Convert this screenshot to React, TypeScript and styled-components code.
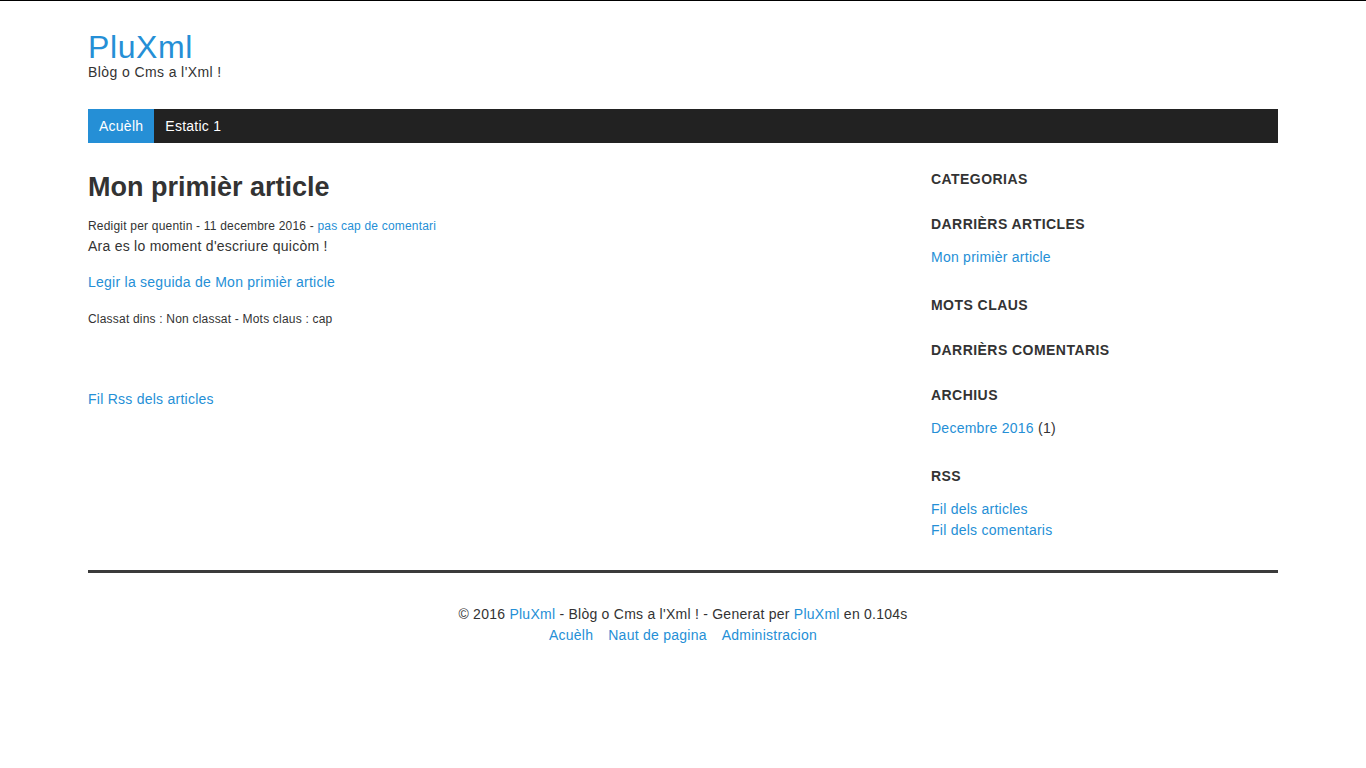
import React from "react";
import styled, { createGlobalStyle } from "styled-components";

const Global = createGlobalStyle`
  html, body { margin: 0; padding: 0; background: #fff; }
  body {
    font-family: "Liberation Sans", Arial, sans-serif;
    color: #333;
    font-size: 14px;
    letter-spacing: 0.25px;
    border-top: 1px solid #000;
  }
  a { color: #258fd6; text-decoration: none; }
`;

const Container = styled.div`
  width: 1190px;
  margin: 0 auto;
`;

const Header = styled.header`
  padding-top: 29px;
`;

const SiteTitle = styled.a`
  display: block;
  font-size: 32px;
  line-height: 34px;
  letter-spacing: 0.6px;
  color: #258fd6;
`;

const SiteDesc = styled.p`
  margin: 0;
  font-size: 14px;
  line-height: 16px;
  letter-spacing: 0.4px;
  color: #333;
`;

const Nav = styled.nav`
  margin-top: 29px;
  height: 34px;
  background: #222;
  display: flex;
`;

const NavItem = styled.a<{ $active?: boolean }>`
  display: flex;
  align-items: center;
  padding: 0 11px;
  font-size: 14px;
  color: #fff;
  background: ${(p) => (p.$active ? "#258fd6" : "transparent")};
`;

const Columns = styled.div`
  display: grid;
  grid-template-columns: 843px 1fr;
  padding-top: 28px;
`;

const Main = styled.main``;

const ArticleTitle = styled.h1`
  margin: 0;
  font-size: 27px;
  line-height: 32px;
  font-weight: bold;
  letter-spacing: 0;
  color: #333;
`;

const Meta = styled.p`
  margin: 15px 0 0;
  font-size: 12px;
  line-height: 17px;
  letter-spacing: 0.2px;
`;

const Body = styled.p<{ $top?: number }>`
  margin: ${(p) => p.$top ?? 0}px 0 0;
  font-size: 14px;
  line-height: 20px;
`;

const Tags = styled.p`
  margin: 19px 0 0;
  font-size: 12px;
  line-height: 17px;
  letter-spacing: 0.2px;
`;

const RssLink = styled.p`
  margin: 61px 0 0;
  font-size: 14px;
  line-height: 20px;
`;

const Sidebar = styled.aside`
  margin-top: -2px;
`;

const Section = styled.section`
  margin-bottom: 25px;
  &:last-child { margin-bottom: 0; }
`;

const SectionTitle = styled.h3`
  margin: 0;
  font-size: 14px;
  line-height: 20px;
  font-weight: bold;
  letter-spacing: 0.45px;
  text-transform: uppercase;
  color: #333;
`;

const List = styled.ul`
  list-style: none;
  margin: 13px 0 0;
  padding: 0 0 2px;
  font-size: 14px;
  line-height: 21px;
`;

const Footer = styled.footer`
  margin-top: 27px;
  border-top: 3px solid #3b3b3b;
  padding-top: 31px;
  text-align: center;
  font-size: 14px;
  line-height: 21px;
`;

const FooterLinks = styled.div`
  display: flex;
  justify-content: center;
  gap: 15px;
`;

export default function App() {
  return (
    <>
      <Global />
      <Container>
        <Header>
          <SiteTitle href="#">PluXml</SiteTitle>
          <SiteDesc>Blòg o Cms a l'Xml !</SiteDesc>
        </Header>
        <Nav>
          <NavItem $active href="#">Acuèlh</NavItem>
          <NavItem href="#">Estatic 1</NavItem>
        </Nav>
        <Columns>
          <Main>
            <ArticleTitle>Mon primièr article</ArticleTitle>
            <Meta>
              Redigit per quentin - 11 decembre 2016 - <a href="#">pas cap de comentari</a>
            </Meta>
            <Body $top={1}>Ara es lo moment d'escriure quicòm !</Body>
            <Body $top={16}>
              <a href="#">Legir la seguida de Mon primièr article</a>
            </Body>
            <Tags>Classat dins : Non classat - Mots claus : cap</Tags>
            <RssLink>
              <a href="#">Fil Rss dels articles</a>
            </RssLink>
          </Main>
          <Sidebar>
            <Section>
              <SectionTitle>Categorias</SectionTitle>
            </Section>
            <Section>
              <SectionTitle>Darrièrs articles</SectionTitle>
              <List>
                <li><a href="#">Mon primièr article</a></li>
              </List>
            </Section>
            <Section>
              <SectionTitle>Mots claus</SectionTitle>
            </Section>
            <Section>
              <SectionTitle>Darrièrs comentaris</SectionTitle>
            </Section>
            <Section>
              <SectionTitle>Archius</SectionTitle>
              <List>
                <li><a href="#">Decembre 2016</a> (1)</li>
              </List>
            </Section>
            <Section>
              <SectionTitle>RSS</SectionTitle>
              <List>
                <li><a href="#">Fil dels articles</a></li>
                <li><a href="#">Fil dels comentaris</a></li>
              </List>
            </Section>
          </Sidebar>
        </Columns>
        <Footer>
          <div>
            © 2016 <a href="#">PluXml</a> - Blòg o Cms a l'Xml ! - Generat per <a href="#">PluXml</a> en 0.104s
          </div>
          <FooterLinks>
            <a href="#">Acuèlh</a>
            <a href="#">Naut de pagina</a>
            <a href="#">Administracion</a>
          </FooterLinks>
        </Footer>
      </Container>
    </>
  );
}
